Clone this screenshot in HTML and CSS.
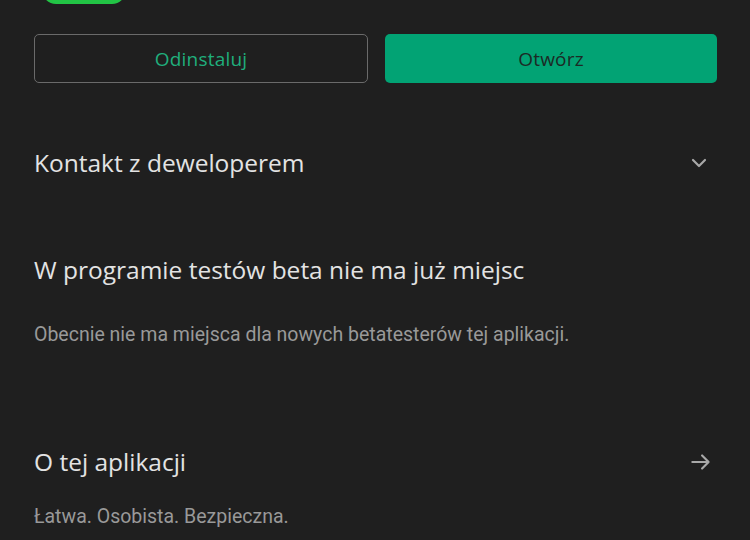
FILE: index.html
```html
<!DOCTYPE html>
<html lang="pl">
<head>
<meta charset="utf-8">
<link rel="stylesheet" href="styles.css">
</head>
<body>
<div class="page">
  <div class="app-icon"></div>
  <div class="actions">
    <button class="btn btn-outline">Odinstaluj</button>
    <button class="btn btn-fill">Otwórz</button>
  </div>
  <div class="row row-contact">
    <h2 class="heading">Kontakt z deweloperem</h2>
    <svg class="icon" width="24" height="24" viewBox="0 0 24 24"><path d="M6 9l6 6 6-6" fill="none" stroke="#a8a8a8" stroke-width="2.2" stroke-linecap="round" stroke-linejoin="round"/></svg>
  </div>
  <div class="section beta">
    <h2 class="heading">W programie testów beta nie ma już miejsc</h2>
    <p class="sub">Obecnie nie ma miejsca dla nowych betatesterów tej aplikacji.</p>
  </div>
  <div class="section about">
    <div class="row">
      <h2 class="heading">O tej aplikacji</h2>
      <svg class="icon" width="26" height="26" viewBox="0 0 24 24"><path d="M4 12h15M13 6l6 6-6 6" fill="none" stroke="#a8a8a8" stroke-width="2" stroke-linecap="round" stroke-linejoin="round"/></svg>
    </div>
    <p class="sub">Łatwa. Osobista. Bezpieczna.</p>
  </div>
</div>
</body>
</html>
```
FILE: styles.css
```css
html, body {
  margin: 0;
  padding: 0;
  background: #1f1f1f;
}
.page {
  width: 750px;
  height: 540px;
  overflow: hidden;
  padding: 0 33px 0 34px;
  box-sizing: border-box;
  font-family: "Open Sans", "Liberation Sans", sans-serif;
  color: #e3e3e3;
}
.app-icon {
  width: 84px;
  height: 14px;
  margin: -10px 0 0 8px;
  background: #22c445;
  border-radius: 0 0 14px 14px;
}
.actions {
  display: flex;
  gap: 17px;
  margin-top: 30px;
}
.btn {
  flex: 1;
  height: 49px;
  border-radius: 5px;
  font-family: "Open Sans", "Liberation Sans", sans-serif;
  font-size: 19px;
  font-weight: 500;
  letter-spacing: 0.2px;
  cursor: pointer;
  box-sizing: border-box;
}
.btn-outline {
  background: transparent;
  border: 1.5px solid #6a6a6a;
  color: #1fae7c;
}
.btn-fill {
  background: #02a374;
  border: none;
  color: #1c2a25;
}
.row {
  display: flex;
  align-items: center;
  justify-content: space-between;
}
.row-contact {
  margin-top: 64px;
}
.row-contact .icon {
  margin-right: 6px;
}
.heading {
  margin: 0;
  font-size: 24.5px;
  font-weight: 500;
  line-height: 32px;
  color: #e3e3e3;
}
.sub {
  margin: 0;
  font-family: Roboto, "Liberation Sans", sans-serif;
  font-size: 19.5px;
  line-height: 26px;
  color: #999999;
}
.beta {
  margin-top: 75px;
}
.beta .sub {
  margin-top: 36px;
}
.about {
  margin-top: 98px;
}
.about .icon {
  margin-right: 3px;
}
.about .sub {
  margin-top: 26px;
}
```
